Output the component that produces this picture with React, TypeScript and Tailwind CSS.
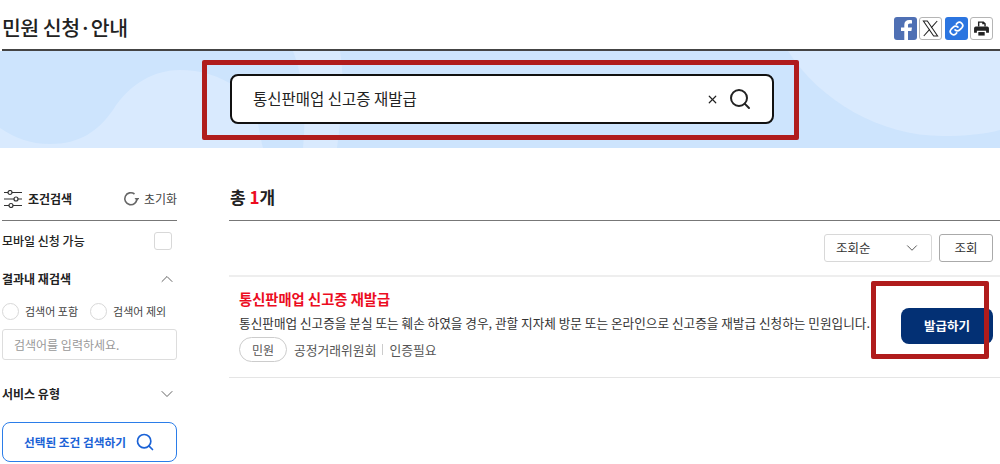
import { ChevronDown, ChevronUp, Search, X } from "lucide-react";

const FONT = "font-['Noto_Sans_CJK_KR','Noto_Sans',sans-serif]";

function ShareIcons() {
  return (
    <div className="flex gap-[2.5px] pt-[17px] pr-[7px]">
      <span className="flex size-[23px] items-end justify-center overflow-hidden rounded-[3px] bg-[#4f70b4]">
        <svg viewBox="0 0 23 23" className="size-[23px]" fill="#fff">
          <path d="M14 23v-9h3.400l.6-3.600h-4V8.300c0-1.200.5-1.900 1.900-1.900H18V3.200c-.5-.1-1.600-.2-2.800-.2-2.900 0-4.900 1.700-4.900 4.900v2.500H7V14h3.300v9z" />
        </svg>
      </span>
      <span className="flex size-[23px] items-center justify-center rounded-[3px] border border-[#b5b5b5] bg-white">
        <svg viewBox="0 0 24 24" className="size-[19px]" fill="none" stroke="#222" strokeWidth="1.3">
          <path d="M3 2.500h5l13 19h-5zM20.500 2.500l-7.700 8.700M3.500 21.500l7.700-8.700" />
        </svg>
      </span>
      <span className="flex size-[23px] items-center justify-center rounded-[3px] bg-[#2b75e0]">
        <svg viewBox="0 0 24 24" className="size-[17px]" fill="none" stroke="#fff" strokeWidth="2.400" strokeLinecap="round">
          <path d="M10 14a4.500 4.500 0 0 0 6.500 0l3-3a4.600 4.600 0 0 0-6.500-6.500l-1.200 1.200" />
          <path d="M14 10a4.500 4.500 0 0 0-6.500 0l-3 3a4.600 4.600 0 0 0 6.500 6.500l1.200-1.200" />
        </svg>
      </span>
      <span className="flex size-[23px] items-center justify-center rounded-[3px] border border-[#b5b5b5] bg-white">
        <svg viewBox="0 0 24 24" className="size-[17px]" fill="#222">
          <path d="M7 2h8l3 3v4h-2V6h-3V4H9v5H7z" />
          <path d="M4 9h16a2.500 2.500 0 0 1 2.500 2.500V18h-4v-3H5.500v3h-4v-6.500A2.500 2.500 0 0 1 4 9z" />
          <path d="M7.500 17h9v5h-9z" />
        </svg>
      </span>
    </div>
  );
}

function SearchBanner() {
  return (
    <div className="relative flex h-[97px] justify-center overflow-hidden bg-[#cde4fd] pt-[23px] pl-[4px]">
      {/* background waves */}
      <svg viewBox="0 0 1000 97" className="absolute inset-0 h-full w-full" fill="#d9eafe">
        <path d="M0 77C15 87 30 93 50 93 80 93 98 80 113 59 130 32 155 19 180 19 200 19 218 24 240 38 258 50 258 80 263 97H0Z" />
        <path d="M293 0C305 30 306 70 303 97H337C342 60 345 30 340 0Z" />
        <path d="M788 0C820 50 880 85 943 85 965 85 985 83 1000 79V0Z" />
      </svg>
      <div className="relative flex h-[50px] w-[544px] items-center rounded-lg border-2 border-[#111] bg-white pr-[20px] pl-[21px]">
        <span className="text-[15.5px] text-[#222]">통신판매업 신고증 재발급</span>
        <X className="mr-[9px] ml-auto size-[13px] text-[#222]" strokeWidth={2.2} />
        <Search className="size-[24px] text-[#222]" strokeWidth={2} />
      </div>
    </div>
  );
}

function FilterIcon() {
  return (
    <svg viewBox="0 0 18 18" className="mr-[6px] ml-[2px] size-[18px]" fill="#fff" stroke="#333" strokeWidth="1.200">
      <path d="M0 2.500h18M0 9h18M0 15.500h18" />
      <circle cx="6" cy="2.500" r="2" />
      <circle cx="12" cy="9" r="2" />
      <circle cx="7" cy="15.500" r="2" />
    </svg>
  );
}

function ResetIcon() {
  return (
    <svg viewBox="0 0 16 16" className="mr-[5px] ml-auto size-[16px]" fill="none" stroke="#666" strokeWidth="1.600">
      <path d="M13.800 7.500A6 6 0 1 1 11.500 3" />
      <path d="M11.500 7h5l-2.500 3z" fill="#666" stroke="none" />
    </svg>
  );
}

function Radio({ label }: { label: string }) {
  return (
    <span className="flex items-center gap-[6px] text-[11px] text-[#444]">
      <span className="size-[17px] rounded-full border border-[#d8d8d8] bg-white" />
      {label}
    </span>
  );
}

function Sidebar() {
  return (
    <aside className="w-[175px] shrink-0">
      <div className="flex h-[46px] items-center border-b border-[#777] pt-[5px] pb-[3px]">
        <FilterIcon />
        <span className="text-[12px] font-bold text-[#222]">조건검색</span>
        <ResetIcon />
        <span className="text-[12px] text-[#444]">초기화</span>
      </div>
      <div className="flex h-[39px] items-center justify-between pr-[5px]">
        <span className="text-[12px] font-medium text-[#222]">모바일 신청 가능</span>
        <span className="size-[18px] rounded-[3px] border border-[#d8d8d8]" />
      </div>
      <div className="flex h-[37px] items-center justify-between">
        <span className="text-[12px] font-bold text-[#222]">결과내 재검색</span>
        <ChevronUp className="size-[20px] text-[#555]" strokeWidth={1.1} />
      </div>
      <div className="mt-[6px] flex gap-[12px]">
        <Radio label="검색어 포함" />
        <Radio label="검색어 제외" />
      </div>
      <div className="mt-[9px] flex h-[31px] items-center rounded-[3px] border border-[#ddd] pl-[11px] text-[12px] text-[#999]">
        검색어를 입력하세요.
      </div>
      <div className="mt-[21px] flex h-[26px] items-center justify-between">
        <span className="text-[12px] font-bold text-[#222]">서비스 유형</span>
        <ChevronDown className="size-[20px] text-[#555]" strokeWidth={1.1} />
      </div>
      <div className="mt-[15px] flex h-[40px] items-center justify-center gap-[9px] rounded-lg border-[1.5px] border-[#2b7de9] text-[11.7px] font-bold text-[#1a62d6]">
        선택된 조건 검색하기
        <Search className="size-[20px] text-[#1a62d6]" strokeWidth={2} />
      </div>
    </aside>
  );
}

function Results() {
  return (
    <main className="relative ml-[52px] min-w-0 flex-1">
      <div className="flex h-[46px] items-center border-b border-[#777] pb-[1px] pl-[1px] text-[17px] font-bold text-[#222]">
        <span>
          총 <span className="text-[#ec0d1f]">1</span>개
        </span>
      </div>
      <div className="flex h-[56px] items-start justify-end gap-[7px] border-b-2 border-[#eee] pt-[13px] pr-[7px]">
        <span className="flex h-[28px] w-[108px] items-center justify-between rounded-[3px] border border-[#d8d8d8] pr-[10px] pl-[11px] text-[12.5px] text-[#333]">
          조회순
          <ChevronDown className="size-[18px] text-[#555]" strokeWidth={1.3} />
        </span>
        <span className="flex h-[28px] w-[54px] items-center justify-center rounded-[3px] border border-[#aaa] text-[12.5px] text-[#333]">
          조회
        </span>
      </div>
      <div className="flex h-[101px] items-center justify-between border-b border-[#e5e5e5] pr-[7px] pl-[10px]">
        <div className="min-w-0 pb-[3px] whitespace-nowrap">
          <div className="text-[14.3px] leading-[20px] font-bold text-[#ec0d1f]">통신판매업 신고증 재발급</div>
          <div className="mt-[4px] text-[12.65px] leading-[20px] text-[#333]">
            통신판매업 신고증을 분실 또는 훼손 하였을 경우, 관할 지자체 방문 또는 온라인으로 신고증을 재발급 신청하는 민원입니다.
          </div>
          <div className="mt-[4px] flex items-center text-[12.8px] text-[#555]">
            <span className="mr-[7px] flex h-[25px] w-[48px] items-center justify-center rounded-full border border-[#ccc] text-[12px]">
              민원
            </span>
            공정거래위원회
            <span className="mx-[6px] h-[11px] w-px bg-[#ccc]" />
            인증필요
          </div>
        </div>
        <span className="mt-[-2px] flex h-[36px] w-[92px] shrink-0 items-center justify-center rounded-lg bg-[#033074] text-[12.5px] font-bold text-white">
          발급하기
        </span>
      </div>
    </main>
  );
}

export default function App() {
  return (
    <div className={`relative h-[464px] w-[1000px] overflow-hidden bg-white ${FONT}`}>
      <header className="ml-[2px] flex h-[51px] items-start justify-between border-b-2 border-[#444]">
        <h1 className="pt-[12px] text-[20.5px] leading-[30px] font-medium tracking-[-0.5px] text-[#222]">민원 신청·안내</h1>
        <ShareIcons />
      </header>
      <SearchBanner />
      <div className="mt-[27px] flex pl-[2px]">
        <Sidebar />
        <Results />
      </div>

      {/* review annotations drawn over the page */}
      <div className="absolute top-[60px] left-[202px] h-[80px] w-[597px] rounded-[2px] border-[5px] border-[#b01c1c]" />
      <div className="absolute top-[281px] left-[871px] h-[78px] w-[118px] rounded-[2px] border-[5px] border-[#b01c1c]" />
    </div>
  );
}
